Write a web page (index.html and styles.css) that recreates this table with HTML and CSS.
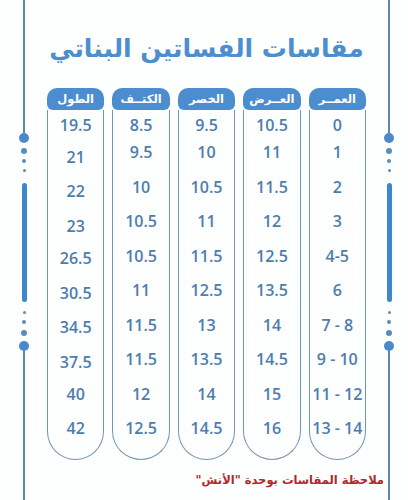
FILE: index.html
```html
<!DOCTYPE html>
<html lang="ar">
<head>
<meta charset="utf-8">
<title>مقاسات الفساتين البناتي</title>
<link rel="stylesheet" href="styles.css">
</head>
<body>
<div class="page">
  <div class="rail">
    <span class="line top"></span>
    <span class="dot d10"></span>
    <span class="dot d6 m5"></span>
    <span class="dot d4 m5"></span>
    <span class="dot d3 m6"></span>
    <span class="bar"></span>
    <span class="dot d3 m9"></span>
    <span class="dot d4 m6"></span>
    <span class="dot d6 m6"></span>
    <span class="dot d10 m5"></span>
    <span class="line rest"></span>
  </div>

  <main class="content">
    <h1 class="title" dir="rtl">مقاسات الفساتين البناتي</h1>

    <div class="table" dir="rtl">
      <div class="col">
        <div class="head">العمــر</div>
        <div class="body">
          <div class="cell first">0</div>
          <div class="cell">1</div>
          <div class="cell">2</div>
          <div class="cell">3</div>
          <div class="cell" dir="ltr">4-5</div>
          <div class="cell">6</div>
          <div class="cell" dir="ltr">7 - 8</div>
          <div class="cell" dir="ltr">9 - 10</div>
          <div class="cell" dir="ltr">11 - 12</div>
          <div class="cell" dir="ltr">13 - 14</div>
        </div>
      </div>
      <div class="col">
        <div class="head">العــرض</div>
        <div class="body">
          <div class="cell first">10.5</div>
          <div class="cell">11</div>
          <div class="cell">11.5</div>
          <div class="cell">12</div>
          <div class="cell">12.5</div>
          <div class="cell">13.5</div>
          <div class="cell">14</div>
          <div class="cell">14.5</div>
          <div class="cell">15</div>
          <div class="cell">16</div>
        </div>
      </div>
      <div class="col">
        <div class="head">الخصر</div>
        <div class="body">
          <div class="cell first">9.5</div>
          <div class="cell">10</div>
          <div class="cell">10.5</div>
          <div class="cell">11</div>
          <div class="cell">11.5</div>
          <div class="cell">12.5</div>
          <div class="cell">13</div>
          <div class="cell">13.5</div>
          <div class="cell">14</div>
          <div class="cell">14.5</div>
        </div>
      </div>
      <div class="col">
        <div class="head">الكتــف</div>
        <div class="body">
          <div class="cell first">8.5</div>
          <div class="cell">9.5</div>
          <div class="cell">10</div>
          <div class="cell">10.5</div>
          <div class="cell">10.5</div>
          <div class="cell">11</div>
          <div class="cell">11.5</div>
          <div class="cell">11.5</div>
          <div class="cell">12</div>
          <div class="cell">12.5</div>
        </div>
      </div>
      <div class="col">
        <div class="head">الطول</div>
        <div class="body">
          <div class="cell first">19.5</div>
          <div class="cell dn">21</div>
          <div class="cell dn">22</div>
          <div class="cell dn">23</div>
          <div class="cell dn2">26.5</div>
          <div class="cell dn2">30.5</div>
          <div class="cell dn2">34.5</div>
          <div class="cell dn2">37.5</div>
          <div class="cell">40</div>
          <div class="cell">42</div>
        </div>
      </div>
    </div>

    <p class="note" dir="rtl">ملاحظة المقاسات بوحدة "الأنش"</p>
  </main>

  <div class="rail">
    <span class="line top"></span>
    <span class="dot d10"></span>
    <span class="dot d6 m5"></span>
    <span class="dot d4 m5"></span>
    <span class="dot d3 m6"></span>
    <span class="bar"></span>
    <span class="dot d3 m9"></span>
    <span class="dot d4 m6"></span>
    <span class="dot d6 m6"></span>
    <span class="dot d10 m5"></span>
    <span class="line rest"></span>
  </div>
</div>
</body>
</html>
```

FILE: styles.css
```css
html, body {
  margin: 0;
  padding: 0;
  background: #fdfefe;
}

.page {
  width: 408px;
  height: 500px;
  overflow: hidden;
  display: flex;
  padding: 0 14px 0 19px;
  box-sizing: border-box;
}

.rail {
  width: 10px;
  height: 500px;
  display: flex;
  flex-direction: column;
  align-items: center;
  flex: none;
}

.line {
  width: 2px;
  background: #5a87ad;
  display: block;
}
.line.top { height: 133px; }
.line.rest { flex: 1; }

.dot {
  display: block;
  border-radius: 50%;
  background: #4a89cc;
  flex: none;
}
.d10 { width: 10px; height: 10px; }
.d6 { width: 6px; height: 6px; background: #5a8cc0; }
.d4 { width: 4px; height: 4px; background: #5f8bb6; }
.d3 { width: 3px; height: 3px; background: #5f8bb6; }
.m5 { margin-top: 5px; }
.m6 { margin-top: 6px; }
.m9 { margin-top: 9px; }

.bar {
  display: block;
  width: 5px;
  height: 119px;
  margin-top: 11px;
  border-radius: 3px;
  background: #3d87cd;
}

.content {
  flex: 1;
  display: flex;
  flex-direction: column;
  min-width: 0;
}

.title {
  margin: 29px 0 0 0;
  height: 40px;
  line-height: 40px;
  text-align: center;
  white-space: nowrap;
  font-family: "DejaVu Sans", sans-serif;
  font-weight: bold;
  font-size: 25px;
  color: #4c8fcf;
}

.table {
  margin-top: 19px;
  padding: 0 18px;
  display: flex;
  gap: 8px;
}

.col {
  flex: 1;
  display: flex;
  flex-direction: column;
}

.head {
  height: 22px;
  line-height: 22px;
  background: #4b8dcf;
  border-radius: 10px 10px 6px 6px;
  color: #ffffff;
  text-align: center;
  font-family: "DejaVu Sans", sans-serif;
  font-weight: bold;
  font-size: 11.5px;
  white-space: nowrap;
}

.body {
  height: 350px;
  box-sizing: border-box;
  border: 1.5px solid #7195b5;
  border-top: none;
  border-radius: 0 0 29px 29px;
}

.cell {
  height: 34.5px;
  box-sizing: border-box;
  display: flex;
  align-items: center;
  justify-content: center;
  font-family: "Open Sans", sans-serif;
  font-weight: 600;
  font-size: 16px;
  color: #4d7dad;
  white-space: nowrap;
}
.cell.first { height: 24.75px; padding-top: 5px; }
.cell.dn { padding-top: 9px; }
.cell.dn2 { padding-top: 5px; }

.note {
  margin: 12px 0 0 0;
  text-align: right;
  white-space: nowrap;
  font-family: "DejaVu Sans", sans-serif;
  font-weight: bold;
  font-size: 11.5px;
  line-height: 16px;
  color: #b3262b;
}
```
